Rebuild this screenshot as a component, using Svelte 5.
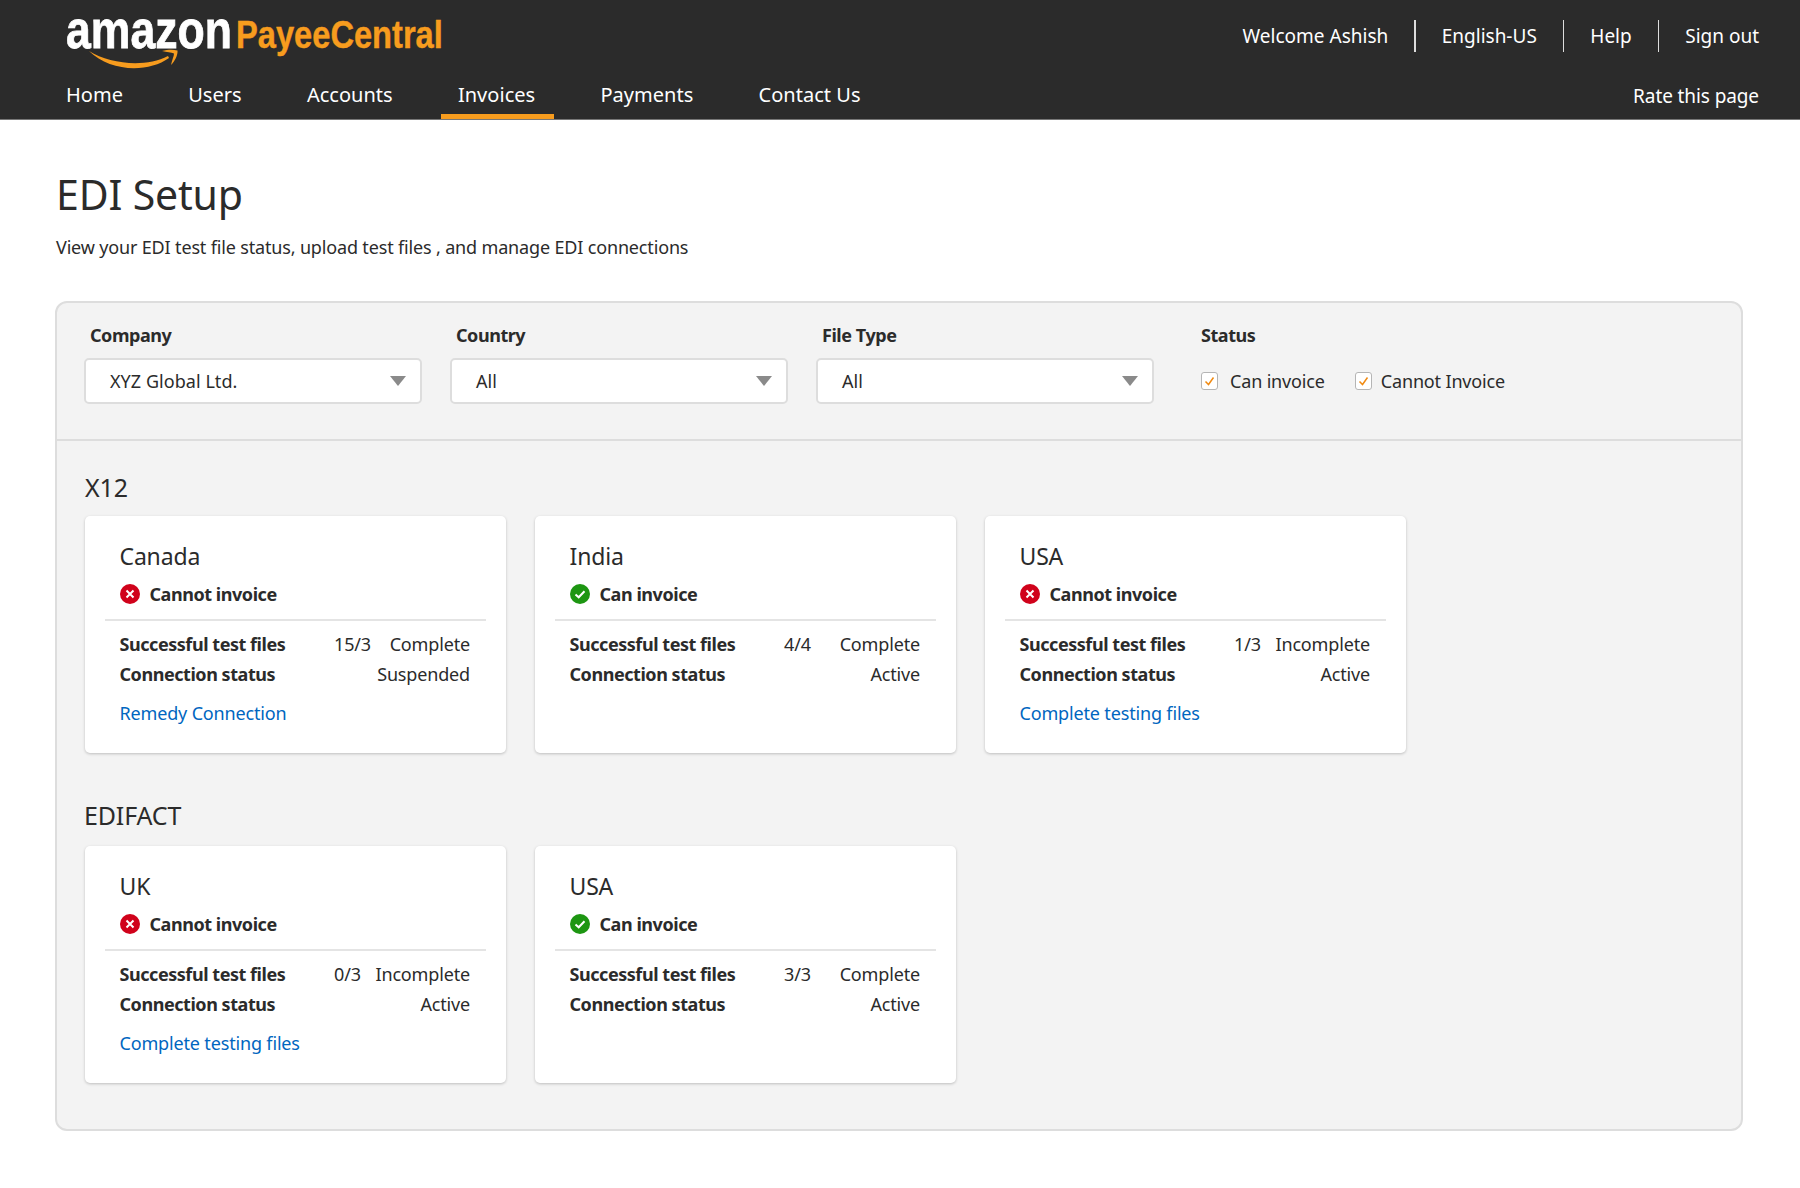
<script lang="ts">
	const navItems = ['Home', 'Users', 'Accounts', 'Invoices', 'Payments', 'Contact Us'];
	const topLinks = ['Welcome Ashish', 'English-US', 'Help', 'Sign out'];

	const filters = [
		{ label: 'Company', value: 'XYZ Global Ltd.' },
		{ label: 'Country', value: 'All' },
		{ label: 'File Type', value: 'All' }
	];

	const sections = [
		{
			name: 'X12',
			cards: [
				{ country: 'Canada', ok: false, files: '15/3', state: 'Complete', conn: 'Suspended', link: 'Remedy Connection' },
				{ country: 'India', ok: true, files: '4/4', state: 'Complete', conn: 'Active', link: '' },
				{ country: 'USA', ok: false, files: '1/3', state: 'Incomplete', conn: 'Active', link: 'Complete testing files' }
			]
		},
		{
			name: 'EDIFACT',
			cards: [
				{ country: 'UK', ok: false, files: '0/3', state: 'Incomplete', conn: 'Active', link: 'Complete testing files' },
				{ country: 'USA', ok: true, files: '3/3', state: 'Complete', conn: 'Active', link: '' }
			]
		}
	];
</script>

<header class="header">
	<div class="top-row">
		<svg class="logo" width="460" height="71" viewBox="0 0 460 71">
			<text class="logo-amazon" x="79.9" y="48" transform="scale(0.826 1)">amazon</text>
			<text class="logo-payee" x="278.3" y="48" transform="scale(0.848 1)">PayeeCentral</text>
			<path d="M89 51 C110 64 145 68 168 56 L169 58 C148 73 110 72 89 51 Z" fill="#f79c1e" />
			<path d="M162 51 C168 49.5 173 49.5 177.5 50.5 C178 55 175 61 171 65 C172 60 174 56 174 53.5 C171 52.5 167 52 162 51 Z" fill="#f79c1e" />
		</svg>
		<div class="top-links">
			{#each topLinks as link, i}
				{#if i > 0}<span class="sep"></span>{/if}
				<span>{link}</span>
			{/each}
		</div>
	</div>
	<div class="nav-row">
		<nav class="nav">
			{#each navItems as item}
				<span class="nav-item" class:active={item === 'Invoices'}>{item}</span>
			{/each}
		</nav>
		<span class="rate">Rate this page</span>
	</div>
</header>

<main class="page">
	<h1 class="title">EDI Setup</h1>
	<p class="subtitle">View your EDI test file status, upload test files , and manage EDI connections</p>

	<div class="panel">
		<div class="filters">
			{#each filters as filter}
				<div class="filter">
					<div class="filter-label">{filter.label}</div>
					<div class="select">
						<span>{filter.value}</span>
						<span class="caret"></span>
					</div>
				</div>
			{/each}
			<div class="status-filter">
				<div class="status-label">Status</div>
				<div class="checks">
					<div class="check">
						<svg width="18" height="18" viewBox="0 0 18 18">
							<rect x="0.5" y="0.5" width="16" height="17" rx="2.5" fill="#fff" stroke="#b5b5b5" />
							<path d="M4.5 9.5 L7.5 12.5 L12.5 5.5" fill="none" stroke="#f08a12" stroke-width="1.5" />
						</svg>
						<span>Can invoice</span>
					</div>
					<div class="check second">
						<svg width="18" height="18" viewBox="0 0 18 18">
							<rect x="0.5" y="0.5" width="16" height="17" rx="2.5" fill="#fff" stroke="#b5b5b5" />
							<path d="M4.5 9.5 L7.5 12.5 L12.5 5.5" fill="none" stroke="#f08a12" stroke-width="1.5" />
						</svg>
						<span>Cannot Invoice</span>
					</div>
				</div>
			</div>
		</div>

		<div class="body">
			{#each sections as section}
				<section class="section">
					<h2 class="section-name">{section.name}</h2>
					<div class="cards">
						{#each section.cards as card}
							<article class="card">
								<h3 class="country">{card.country}</h3>
								<div class="invoice-state">
									{#if card.ok}
										<svg width="20" height="20" viewBox="0 0 20 20">
											<circle cx="10" cy="10" r="10" fill="#1d9612" />
											<path d="M5.5 10.5 L8.7 13.3 L14.5 7.2" fill="none" stroke="#fff" stroke-width="2" />
										</svg>
										<span>Can invoice</span>
									{:else}
										<svg width="20" height="20" viewBox="0 0 20 20">
											<circle cx="10" cy="10" r="10" fill="#d0021b" />
											<path d="M6.5 6.5 L13.5 13.5 M13.5 6.5 L6.5 13.5" fill="none" stroke="#fff" stroke-width="2" />
										</svg>
										<span>Cannot invoice</span>
									{/if}
								</div>
								<div class="rows">
									<div class="row">
										<b>Successful test files</b>
										<span>{card.files}</span>
										<span class="right">{card.state}</span>
									</div>
									<div class="row">
										<b>Connection status</b>
										<span></span>
										<span class="right">{card.conn}</span>
									</div>
								</div>
								{#if card.link}
									<span class="link">{card.link}</span>
								{/if}
							</article>
						{/each}
					</div>
				</section>
			{/each}
		</div>
	</div>
</main>

<style>
	:global(body) {
		margin: 0;
		background: #fff;
		color: #2b2b2b;
		font-family: 'Noto Sans', 'Open Sans', sans-serif;
		font-size: 18px;
		letter-spacing: -0.16px;
	}

	.header {
		height: 120px;
		box-sizing: border-box;
		background: #2b2b2b;
		border-bottom: 1px solid #777;
		color: #fff;
		overflow: hidden;
	}

	.top-row {
		height: 71px;
		display: flex;
		justify-content: space-between;
		padding-right: 41px;
	}

	.logo {
		display: block;
		font-family: 'Liberation Sans', sans-serif;
		font-weight: 700;
		letter-spacing: 0;
	}

	.logo-amazon {
		font-size: 54px;
		fill: #fff;
		stroke: #fff;
		stroke-width: 0.8px;
	}

	.logo-payee {
		font-size: 38.5px;
		fill: #f79c1e;
		stroke: #f79c1e;
		stroke-width: 0.4px;
	}

	.top-links {
		display: flex;
		align-items: center;
		height: 71px;
		font-size: 19px;
		letter-spacing: 0;
		gap: 26px;
	}

	.sep {
		width: 1.5px;
		height: 32px;
		background: #ddd;
	}

	.nav-row {
		height: 48px;
		display: flex;
		justify-content: space-between;
		padding-right: 41px;
	}

	.nav {
		display: flex;
		gap: 31.2px;
		padding-left: 49px;
		font-size: 20px;
		letter-spacing: 0.03px;
	}

	.nav-item {
		padding: 0 17px;
		height: 43px;
		line-height: 48px;
		border-bottom: 5px solid transparent;
	}

	.nav-item.active {
		padding-right: 19px;
		margin-right: -2px;
		border-bottom-color: #f79c1e;
	}

	.rate {
		font-size: 19px;
		line-height: 50px;
		letter-spacing: -0.1px;
	}

	.page {
		padding: 0 57px 58px 55px;
	}

	.title {
		margin: 50px 0 17px 1px;
		font-size: 41px;
		line-height: 48px;
		font-weight: 400;
	}

	.subtitle {
		margin: 0 0 42px 1px;
		font-size: 18px;
		line-height: 24px;
	}

	.panel {
		background: #f3f3f3;
		border: 2px solid #ddd;
		border-radius: 12px;
		box-sizing: border-box;
	}

	.filters {
		display: flex;
		height: 138px;
		box-sizing: border-box;
		padding: 20px 0 0 27px;
		gap: 28px;
		border-bottom: 2px solid #ddd;
	}

	.filter {
		width: 338px;
	}

	.filter-label,
	.status-label {
		font-weight: 700;
		letter-spacing: -0.45px;
		line-height: 24px;
		padding-left: 6px;
		margin-bottom: 11px;
	}

	.status-label {
		padding-left: 0;
	}

	.select {
		height: 46px;
		box-sizing: border-box;
		display: flex;
		align-items: center;
		justify-content: space-between;
		padding: 0 14px 0 24px;
		background: #fff;
		border: 2px solid #ddd;
		border-radius: 5px;
		letter-spacing: 0.05px;
	}

	.caret {
		width: 0;
		height: 0;
		border-left: 8px solid transparent;
		border-right: 8px solid transparent;
		border-top: 10px solid #8a8a8a;
	}

	.status-filter {
		margin-left: 19px;
	}

	.checks {
		display: flex;
		align-items: center;
		height: 46px;
	}

	.check {
		display: flex;
		align-items: center;
		gap: 11px;
	}

	.check.second {
		margin-left: 30px;
		gap: 8px;
	}

	.body {
		padding: 30px 28px 46px;
	}

	.section + .section {
		margin-top: 46px;
	}

	.section-name {
		margin: 0 0 13px;
		font-size: 25px;
		line-height: 32px;
		font-weight: 400;
	}

	.section + .section .section-name {
		margin-bottom: 15px;
		margin-left: -1px;
	}

	.cards {
		display: flex;
		gap: 29px;
	}

	.card {
		width: 421px;
		height: 237px;
		box-sizing: border-box;
		padding: 24px 20px 0;
		background: #fff;
		border-radius: 5px;
		box-shadow: 0 1px 3px rgba(0, 0, 0, 0.22);
	}

	.country {
		margin: 0 0 0 14.5px;
		font-size: 23px;
		line-height: 32px;
		font-weight: 400;
	}

	.invoice-state {
		display: flex;
		align-items: center;
		gap: 10px;
		margin: 8px 0 0 14.5px;
		height: 28px;
		font-weight: 700;
		letter-spacing: -0.45px;
	}

	.rows {
		margin-top: 11px;
		padding: 8px 16px 0 14.5px;
		border-top: 2px solid #e4e4e4;
	}

	.row {
		display: grid;
		grid-template-columns: 214.5px 1fr auto;
		line-height: 30px;
	}

	.row b {
		font-weight: 700;
		letter-spacing: -0.45px;
	}

	.right {
		text-align: right;
	}

	.link {
		display: block;
		margin: 9px 14.5px 0;
		line-height: 30px;
		color: #0066c0;
	}
</style>
